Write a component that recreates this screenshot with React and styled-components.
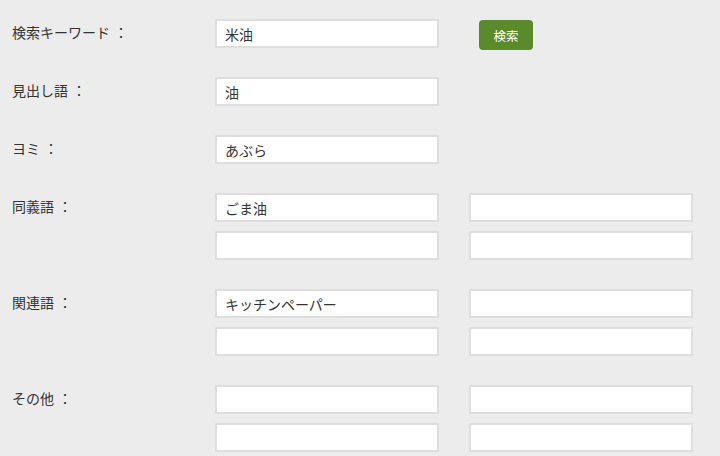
import React from 'react';
import styled, { createGlobalStyle } from 'styled-components';

const GlobalStyle = createGlobalStyle`
  html, body {
    margin: 0;
    padding: 0;
    background: #ececec;
  }
  body {
    font-family: "Noto Sans CJK JP", "Noto Sans", sans-serif;
    color: #333;
  }
`;

const Form = styled.form`
  display: flex;
  flex-direction: column;
  gap: 29px;
  padding: 19px 0 0 12px;
`;

const Row = styled.div`
  display: flex;
  align-items: flex-start;
`;

const Label = styled.label`
  width: 203px;
  flex: none;
  font-size: 14px;
  line-height: 27px;
  color: #333;
`;

const Colon = styled.span`
  margin-left: 4px;
`;

const Fields = styled.div`
  display: grid;
  grid-template-columns: repeat(${p => p.cols}, 224px);
  column-gap: 30px;
  row-gap: 9px;
`;

const Field = styled.input`
  box-sizing: border-box;
  width: 224px;
  height: 29px;
  margin: 0;
  padding: 0 8px;
  border: 2px solid #dedede;
  background: #fff;
  font-family: "Noto Sans CJK JP", "Noto Sans", sans-serif;
  font-size: 14px;
  color: #333;
  outline: none;
`;

const Button = styled.button`
  margin: 1px 0 -2px 40px;
  width: 54px;
  height: 30px;
  border: none;
  border-radius: 4px;
  background: #5b8a2d;
  color: #fff;
  font-family: "Noto Sans CJK JP", sans-serif;
  font-size: 12.5px;
  padding: 0;
`;

const groups = [
  { label: '見出し語', values: ['油'], cols: 1 },
  { label: 'ヨミ', values: ['あぶら'], cols: 1 },
  { label: '同義語', values: ['ごま油', '', '', ''], cols: 2 },
  { label: '関連語', values: ['キッチンペーパー', '', '', ''], cols: 2 },
  { label: 'その他', values: ['', '', '', ''], cols: 2 },
];

// grid fills row by row, so left column = values[0], values[2]
const order = vals =>
  vals.length === 4 ? [vals[0], vals[2], vals[1], vals[3]] : vals;

const FieldLabel = ({ children }) => (
  <Label>
    {children}
    <Colon>：</Colon>
  </Label>
);

export default function App() {
  return (
    <div lang="ja">
      <GlobalStyle />
      <Form onSubmit={e => e.preventDefault()}>
        <Row>
          <FieldLabel>検索キーワード</FieldLabel>
          <Field defaultValue="米油" />
          <Button type="submit">検索</Button>
        </Row>
        {groups.map(g => (
          <Row key={g.label}>
            <FieldLabel>{g.label}</FieldLabel>
            <Fields cols={g.cols}>
              {order(g.values).map((v, i) => (
                <Field key={i} defaultValue={v} />
              ))}
            </Fields>
          </Row>
        ))}
      </Form>
    </div>
  );
}
